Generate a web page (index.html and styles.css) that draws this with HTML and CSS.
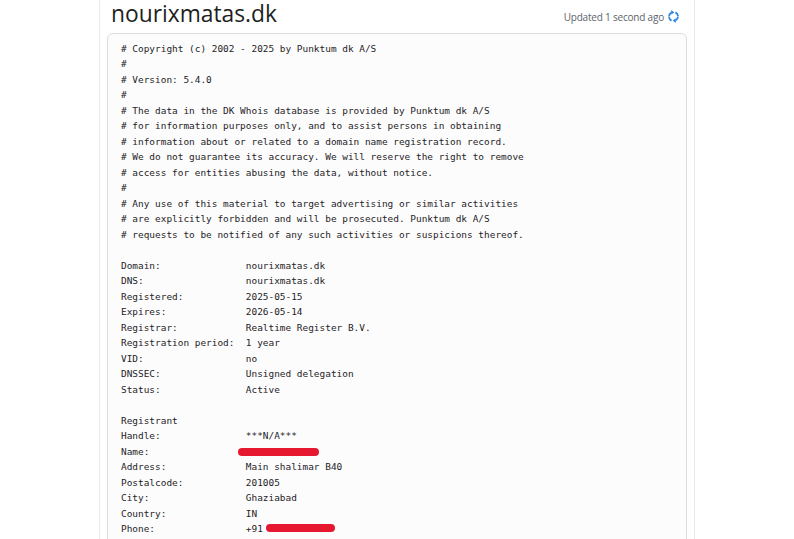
FILE: index.html
```html
<!DOCTYPE html>
<html lang="en">
<head>
<meta charset="utf-8">
<title>nourixmatas.dk</title>
<link rel="stylesheet" href="styles.css">
</head>
<body>
<main class="card">
<header class="head">
<h1 class="title">nourixmatas.dk</h1>
<div class="updated"><span>Updated 1 second ago</span>
<svg class="refresh" width="11" height="13" viewBox="0 0 11 13" aria-hidden="true"><path d="M1 6.5A4.5 4.5 0 0 1 3.4 2.6M10 6.5A4.5 4.5 0 0 1 7.6 10.4" fill="none" stroke="#2e86e0" stroke-width="1.8"/><path d="M7.4 2.4A4.5 4.5 0 0 1 10 6M3.6 10.6A4.5 4.5 0 0 1 1 7" fill="none" stroke="#2e86e0" stroke-width="1.8"/><path d="M3.2 0L6.4 2.4L3.2 4.6ZM7.8 8.4L4.6 10.6L7.8 13Z" fill="#2e86e0"/></svg></div>
</header>
<div class="whois"><pre class="text"># Copyright (c) 2002 - 2025 by Punktum dk A/S
#
# Version: 5.4.0
#
# The data in the DK Whois database is provided by Punktum dk A/S
# for information purposes only, and to assist persons in obtaining
# information about or related to a domain name registration record.
# We do not guarantee its accuracy. We will reserve the right to remove
# access for entities abusing the data, without notice.
#
# Any use of this material to target advertising or similar activities
# are explicitly forbidden and will be prosecuted. Punktum dk A/S
# requests to be notified of any such activities or suspicions thereof.

Domain:               nourixmatas.dk
DNS:                  nourixmatas.dk
Registered:           2025-05-15
Expires:              2026-05-14
Registrar:            Realtime Register B.V.
Registration period:  1 year
VID:                  no
DNSSEC:               Unsigned delegation
Status:               Active

Registrant
Handle:               ***N/A***
Name:                 <span class="redact redact-name"></span>
Address:              Main shalimar B40
Postalcode:           201005
City:                 Ghaziabad
Country:              IN
Phone:                +91 <span class="redact redact-phone"></span></pre></div>
</main>
</body>
</html>
```
FILE: styles.css
```css
html, body { margin: 0; padding: 0; background: #fff; overflow: hidden; height: 539px; }
.card {
  box-sizing: border-box;
  width: 596px;
  height: 539px;
  margin: 0 0 0 99px;
  padding: 0 7px;
  border: 1px solid #e9e9e9;
  border-width: 0 1px;
  background: #fff;
  overflow: hidden;
}
.head {
  display: flex;
  justify-content: space-between;
  align-items: center;
  height: 33px;
  padding: 0 8px 6px 4px;
  box-sizing: border-box;
}
.title {
  margin: 0;
  font: 400 22.8px/27px "Open Sans", sans-serif;
  color: #1d1f21;
}
.updated {
  display: flex;
  align-items: center;
  gap: 4px;
  font: 400 10px/14px "Open Sans", sans-serif;
  letter-spacing: -0.2px;
  color: #5c646c;
  margin-top: 6px;
}
.refresh { display: block; }
.whois {
  background: #fcfcfc;
  border: 1px solid #dcdcdc;
  border-radius: 6px;
  padding: 7px 13px;
  height: 560px;
  box-sizing: border-box;
}
.text {
  margin: 0;
  font: 400 9.43px/15.48px "DejaVu Sans Mono", monospace;
  color: #1f2327;
  white-space: pre;
}
.redact {
  position: absolute;
  height: 8px;
  border-radius: 4px;
  background: #e5182f;
}
.redact-name { left: 238px; top: 448px; width: 81px; }
.redact-phone { left: 266px; top: 524px; width: 69px; }
```
